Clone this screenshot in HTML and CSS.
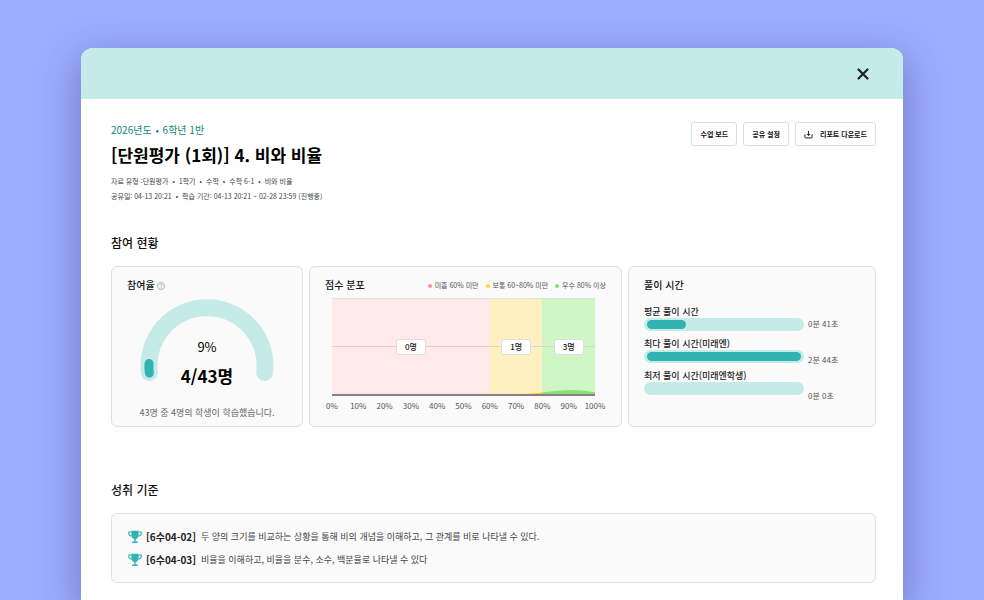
FILE: index.html
```html
<!DOCTYPE html>
<html lang="ko">
<head>
  <meta charset="UTF-8">
  <meta name="viewport" content="width=device-width, initial-scale=1.0">
  <title>[단원평가 (1회)] 4. 비와 비율</title>
  <link rel="stylesheet" href="styles.css">
</head>
<body>
  <main class="modal">
    <div class="modal-bar">
      <button class="close-btn" type="button" aria-label="닫기">
        <svg viewBox="0 0 12 12" width="12" height="12"><path d="M1.5 1.5l9 9M10.5 1.5l-9 9" fill="none" stroke="#222" stroke-width="2.2" stroke-linecap="round"/></svg>
      </button>
    </div>

    <div class="modal-body">
      <header class="report-head">
        <div>
          <p class="class-name">2026년도 <span class="dot">•</span> 6학년 1반</p>
          <h1>[단원평가 (1회)] 4. 비와 비율</h1>
          <ul class="meta">
            <li>자료 유형 :단원평가</li>
            <li>1학기</li>
            <li>수학</li>
            <li>수학 6-1</li>
            <li>비와 비율</li>
          </ul>
          <ul class="meta">
            <li>공유일: 04-13 20:21</li>
            <li>학습 기간: 04-13 20:21 ~ 02-28 23:59 (진행중)</li>
          </ul>
        </div>
        <div class="actions">
          <button type="button">수업 보드</button>
          <button type="button">공유 설정</button>
          <button type="button">
            <svg viewBox="0 0 10 10" width="9" height="9"><path d="M1 4.800v3.200q0 .8.8.8h6.400q.8 0 .8-.8V4.800M5 1v5M3.200 4.400L5 6.200l1.800-1.800" fill="none" stroke="#222" stroke-width="1.100"/></svg>
            리포트 다운로드
          </button>
        </div>
      </header>

      <section>
        <h2>참여 현황</h2>
        <div class="cards">
          <article class="card">
            <h3>참여율
              <svg class="help" viewBox="0 0 10 10" width="8" height="8"><circle cx="5" cy="5" r="4.4" fill="none" stroke="#999" stroke-width="0.9"/><path d="M3.6 4a1.4 1.4 0 1 1 2 1.2q-.6.3-.6.9" fill="none" stroke="#999" stroke-width="0.9"/><circle cx="5" cy="7.4" r="0.6" fill="#999"/></svg>
            </h3>
            <div class="gauge">
              <svg viewBox="0 0 134 82" width="134" height="82">
                <path d="M9.4 73.5A58 58 0 1 1 124.6 73.5" fill="none" stroke="#c5ebe9" stroke-width="17" stroke-linecap="round"/>
                <path d="M9.4 74Q8.6 69 9 64.5" fill="none" stroke="#30b3b1" stroke-width="9" stroke-linecap="round"/>
              </svg>
              <div class="gauge-text">
                <span class="percent">9%</span>
                <strong>4/43명</strong>
              </div>
            </div>
            <p class="note">43명 중 4명의 학생이 학습했습니다.</p>
          </article>

          <article class="card">
            <div class="score-head">
              <h3>점수 분포</h3>
              <ul class="legend">
                <li class="low">미흡 60% 미만</li>
                <li class="mid">보통 60~80% 미만</li>
                <li class="high">우수 80% 이상</li>
              </ul>
            </div>
            <div class="chart">
              <div class="plot">
                <div class="zone low"><span>0명</span></div>
                <div class="zone mid"><span>1명</span></div>
                <div class="zone high"><span>3명</span></div>
                <svg class="curve" viewBox="0 0 100 5" preserveAspectRatio="none">
                  <path d="M73 5Q77 4.6 80 3.6V5Z" fill="#ffc928"/>
                  <path d="M80 3.6Q90 -1.2 100 3.2V5H80Z" fill="#86e374"/>
                </svg>
              </div>
              <div class="axis">
                <span>0%</span><span>10%</span><span>20%</span><span>30%</span><span>40%</span><span>50%</span><span>60%</span><span>70%</span><span>80%</span><span>90%</span><span>100%</span>
              </div>
            </div>
          </article>

          <article class="card">
            <h3>풀이 시간</h3>
            <div class="times">
              <ul class="bars">
                <li>평균 풀이 시간<div class="track"><div class="fill" style="width: 25%"></div></div></li>
                <li>최다 풀이 시간(미래엔)<div class="track"><div class="fill" style="width: 100%"></div></div></li>
                <li>최저 풀이 시간(미래엔학생)<div class="track"><div class="fill" style="width: 0%"></div></div></li>
              </ul>
              <ul class="values">
                <li>0분 41초</li>
                <li>2분 44초</li>
                <li>0분 0초</li>
              </ul>
            </div>
          </article>
        </div>
      </section>

      <section>
        <h2>성취 기준</h2>
        <ul class="card standards">
          <li>
            <svg viewBox="0 0 14 14" width="14" height="14"><path d="M3.400.8h7.200V5c0 2.400-1.500 3.800-2.900 4.200v2.200h2.100v1.600H4.200v-1.600h2.100V9.200C4.900 8.800 3.400 7.400 3.400 5z" fill="#30b3b1"/><path d="M3.400 2H.8v1.200c0 1.600 1.200 2.700 3 2.900M10.600 2h2.600v1.200c0 1.600-1.200 2.700-3 2.900" fill="none" stroke="#30b3b1" stroke-width="1.100"/></svg>
            <b>[6수04-02]</b>
            <span>두 양의 크기를 비교하는 상황을 통해 비의 개념을 이해하고, 그 관계를 비로 나타낼 수 있다.</span>
          </li>
          <li>
            <svg viewBox="0 0 14 14" width="14" height="14"><path d="M3.400.8h7.200V5c0 2.400-1.500 3.800-2.900 4.200v2.200h2.100v1.600H4.200v-1.600h2.100V9.200C4.900 8.800 3.400 7.400 3.400 5z" fill="#30b3b1"/><path d="M3.400 2H.8v1.200c0 1.600 1.200 2.700 3 2.900M10.600 2h2.600v1.200c0 1.600-1.200 2.700-3 2.900" fill="none" stroke="#30b3b1" stroke-width="1.100"/></svg>
            <b>[6수04-03]</b>
            <span>비율을 이해하고, 비율을 분수, 소수, 백분율로 나타낼 수 있다</span>
          </li>
        </ul>
      </section>
    </div>
  </main>
</body>
</html>
```
FILE: styles.css
```css
* {
  box-sizing: border-box;
}
body {
  margin: 0;
  min-height: 100vh;
  padding: 48px 81px 0;
  display: flex;
  background: #9dacff;
  font-family: "Noto Sans CJK KR", "Noto Sans", sans-serif;
  font-size: 9px;
  line-height: 16px;
  color: #222;
}
h1, h2, h3, p, ul {
  margin: 0;
  padding: 0;
}
ul {
  list-style: none;
}
button {
  font-family: inherit;
  cursor: pointer;
}

.modal {
  flex: 1;
  min-width: 0;
  background: #fff;
  border-radius: 12px 12px 0 0;
  box-shadow: 0 12px 40px rgba(40, 40, 100, 0.4);
}
.modal-bar {
  height: 51px;
  padding: 0 30px;
  display: flex;
  align-items: center;
  justify-content: flex-end;
  background: #c5ebe9;
  border-radius: 12px 12px 0 0;
}
.close-btn {
  display: flex;
  padding: 4px;
  border: none;
  background: none;
}
.modal-body {
  padding: 23px 27px 16px 30px;
}

.report-head {
  display: flex;
  justify-content: space-between;
  align-items: flex-start;
  margin-bottom: 29px;
}
.class-name {
  margin-bottom: 2px;
  font-size: 10px;
  color: #108580;
}
.dot {
  margin: 0 1px;
}
h1 {
  margin-bottom: 4px;
  font-size: 17px;
  line-height: 30px;
  font-weight: 700;
  color: #000;
}
.meta {
  display: flex;
  font-size: 7px;
  line-height: 15px;
  color: #444;
}
.meta li + li::before {
  content: "•";
  margin: 0 4px;
}
.actions {
  display: flex;
  gap: 6px;
}
.actions button {
  display: flex;
  align-items: center;
  gap: 7px;
  height: 24px;
  padding: 0 8px;
  border: 1px solid #ddd;
  border-radius: 3px;
  background: #fff;
  font-size: 7px;
  font-weight: 700;
  color: #111;
}

h2 {
  margin-bottom: 13px;
  font-size: 12px;
  line-height: 20px;
  font-weight: 500;
  color: #111;
}
h3 {
  font-size: 10px;
  line-height: 16px;
  font-weight: 500;
  color: #111;
}
.card {
  padding: 10px 15px 5px;
  border: 1px solid #e0e0e0;
  border-radius: 6px;
  background: #fafafa;
}
.cards {
  display: grid;
  grid-template-columns: 192fr 313fr 248fr;
  gap: 6px;
  min-height: 161px;
  margin-bottom: 53px;
}

.help {
  vertical-align: -1px;
}
.gauge {
  display: grid;
  justify-items: center;
  height: 93px;
  margin-top: 6px;
}
.gauge > * {
  grid-area: 1 / 1;
}
.gauge-text {
  align-self: end;
  display: flex;
  flex-direction: column;
  align-items: center;
  color: #000;
}
.percent {
  font-size: 13px;
  line-height: 26px;
}
.gauge-text strong {
  font-size: 17px;
  line-height: 32px;
}
.note {
  margin-top: 13px;
  text-align: center;
  color: #666;
}

.score-head {
  display: flex;
  justify-content: space-between;
}
.legend {
  display: flex;
  gap: 7px;
  font-size: 7px;
  color: #555;
}
.legend li::before {
  content: "";
  display: inline-block;
  width: 4px;
  height: 4px;
  margin-right: 3px;
  border-radius: 50%;
  vertical-align: middle;
}
.legend .low::before {
  background: #ff8f8f;
}
.legend .mid::before {
  background: #ffd338;
}
.legend .high::before {
  background: #7ae66d;
}
.chart {
  margin: 5px 11px 0 7px;
}
.plot {
  position: relative;
  display: grid;
  grid-template-columns: 6fr 2fr 2fr;
  height: 98px;
  border-top: 1px solid #e0e0e0;
  border-bottom: 2px solid #8c7f7f;
}
.zone {
  display: flex;
  align-items: center;
}
.zone::before, .zone::after {
  content: "";
  flex: 1;
  height: 1px;
  background: #d8d2d2;
}
.zone span {
  width: 30px;
  border: 1px solid #ddd;
  border-radius: 3px;
  background: #fff;
  font-size: 8px;
  line-height: 14px;
  font-weight: 500;
  text-align: center;
}
.zone.low {
  background: #ffe9e9;
}
.zone.mid {
  background: #fff0c2;
}
.zone.high {
  background: #cff7c5;
}
.curve {
  position: absolute;
  left: 0;
  bottom: 0;
  width: 100%;
  height: 5px;
}
.axis {
  display: grid;
  grid-template-columns: repeat(11, 1fr);
  margin: 2px -5% 0;
  font-size: 8px;
  text-align: center;
  color: #555;
}

.times {
  display: flex;
  align-items: flex-start;
  gap: 4px;
  margin-top: 12px;
}
.bars {
  width: 160px;
  display: grid;
  gap: 6px;
  font-weight: 500;
  line-height: 13px;
}
.track {
  height: 13px;
  padding: 2px 3px;
  border-radius: 7px;
  background: #c5ebe9;
}
.fill {
  height: 9px;
  border-radius: 5px;
  background: #30b3b1;
}
.values {
  display: grid;
  gap: 20px;
  padding-top: 11px;
  font-size: 8px;
  color: #555;
}

.standards {
  display: grid;
  gap: 7px;
  padding: 15px 16px 14px;
}
.standards li {
  display: flex;
  align-items: center;
  gap: 4px;
}
.standards b {
  font-size: 10px;
  font-weight: 700;
}
.standards span {
  margin-left: 1px;
  color: #444;
}
```
